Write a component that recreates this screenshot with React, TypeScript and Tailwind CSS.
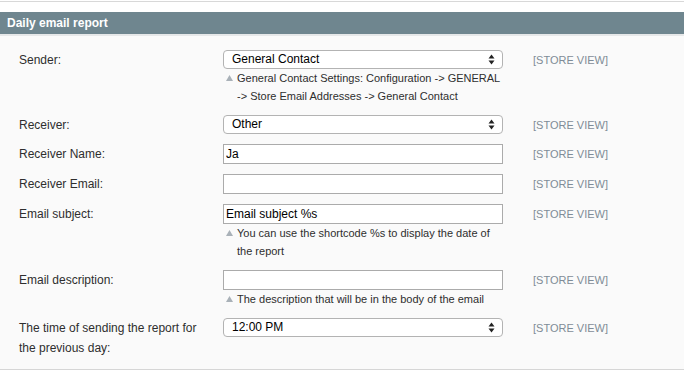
import { ReactNode } from "react";

type Field = {
  label: ReactNode;
  kind: "select" | "input";
  value: string;
  hint?: ReactNode;
};

const fields: Field[] = [
  {
    label: "Sender:",
    kind: "select",
    value: "General Contact",
    hint: (
      <>
        General Contact Settings: Configuration -&gt; GENERAL
        <br />
        -&gt; Store Email Addresses -&gt; General Contact
      </>
    ),
  },
  { label: "Receiver:", kind: "select", value: "Other" },
  { label: "Receiver Name:", kind: "input", value: "Ja" },
  { label: "Receiver Email:", kind: "input", value: "" },
  {
    label: "Email subject:",
    kind: "input",
    value: "Email subject %s",
    hint: (
      <>
        You can use the shortcode %s to display the date of
        <br />
        the report
      </>
    ),
  },
  {
    label: "Email description:",
    kind: "input",
    value: "",
    hint: "The description that will be in the body of the email",
  },
  {
    label: (
      <>
        The time of sending the report for
        <br />
        the previous day:
      </>
    ),
    kind: "select",
    value: "12:00 PM",
  },
];

function SelectArrows() {
  return (
    <svg
      aria-hidden="true"
      className="pointer-events-none absolute right-[8px] top-[4px]"
      height="11"
      viewBox="0 0 7 11"
      width="7"
    >
      <path d="M3.5 0.5 L6.5 4.5 H0.5 Z" fill="#222" />
      <path d="M3.5 10.5 L6.5 6.5 H0.5 Z" fill="#222" />
    </svg>
  );
}

function HintArrow() {
  return (
    <svg
      aria-hidden="true"
      className="mt-[6px] shrink-0"
      height="6"
      viewBox="0 0 7 6"
      width="7"
    >
      <path d="M3.5 0 L7 6 H0 Z" fill="#a9b1b8" />
    </svg>
  );
}

function Control({ field }: { field: Field }) {
  if (field.kind === "select") {
    return (
      <div className="relative h-[19px] w-[280px]">
        <select
          className="block h-[19px] w-full appearance-none rounded-[4px] border border-[#b3b3b3] bg-white pl-[8px] text-[12px] leading-[17px] text-black outline-none"
          defaultValue={field.value}
        >
          <option>{field.value}</option>
        </select>
        <SelectArrows />
      </div>
    );
  }

  return (
    <input
      className="block h-[20px] w-[280px] border border-[#ababab] bg-white px-[2px] text-[12px] leading-[18px] text-black outline-none"
      defaultValue={field.value}
      type="text"
    />
  );
}

export default function App() {
  return (
    <div className="h-[375px] w-[684px] overflow-hidden bg-white font-['Liberation_Sans',Arial,sans-serif]">
      <div className="mt-[1px] h-[1px] bg-[#d8d8d8]" />
      <div className="mt-[10px] flex h-[22px] items-center bg-[#6f868f] px-[7px] text-[12px] font-bold text-white">
        Daily email report
      </div>
      <div className="h-[2px] bg-[#e6e8e9]" />
      <section className="flex h-[334px] flex-col gap-[10px] border-b border-[#d6d6d6] bg-[#fafafa] px-[19px] pt-[14px]">
        {fields.map((field, index) => (
          <div className="flex items-start" key={index}>
            <div className="-mb-px w-[204px] text-[12px] leading-[20px] text-[#2e2e2e]">
              {field.label}
            </div>
            <div className="w-[280px]">
              <Control field={field} />
              {field.hint ? (
                <div className="flex gap-[4px] pl-[3px] text-[11px] leading-[18px] text-[#2e2e2e]">
                  <HintArrow />
                  <span>{field.hint}</span>
                </div>
              ) : null}
            </div>
            <div className="-mb-px ml-[30px] text-[11px] leading-[20px] text-[#7f8c97]">
              [STORE VIEW]
            </div>
          </div>
        ))}
      </section>
    </div>
  );
}
